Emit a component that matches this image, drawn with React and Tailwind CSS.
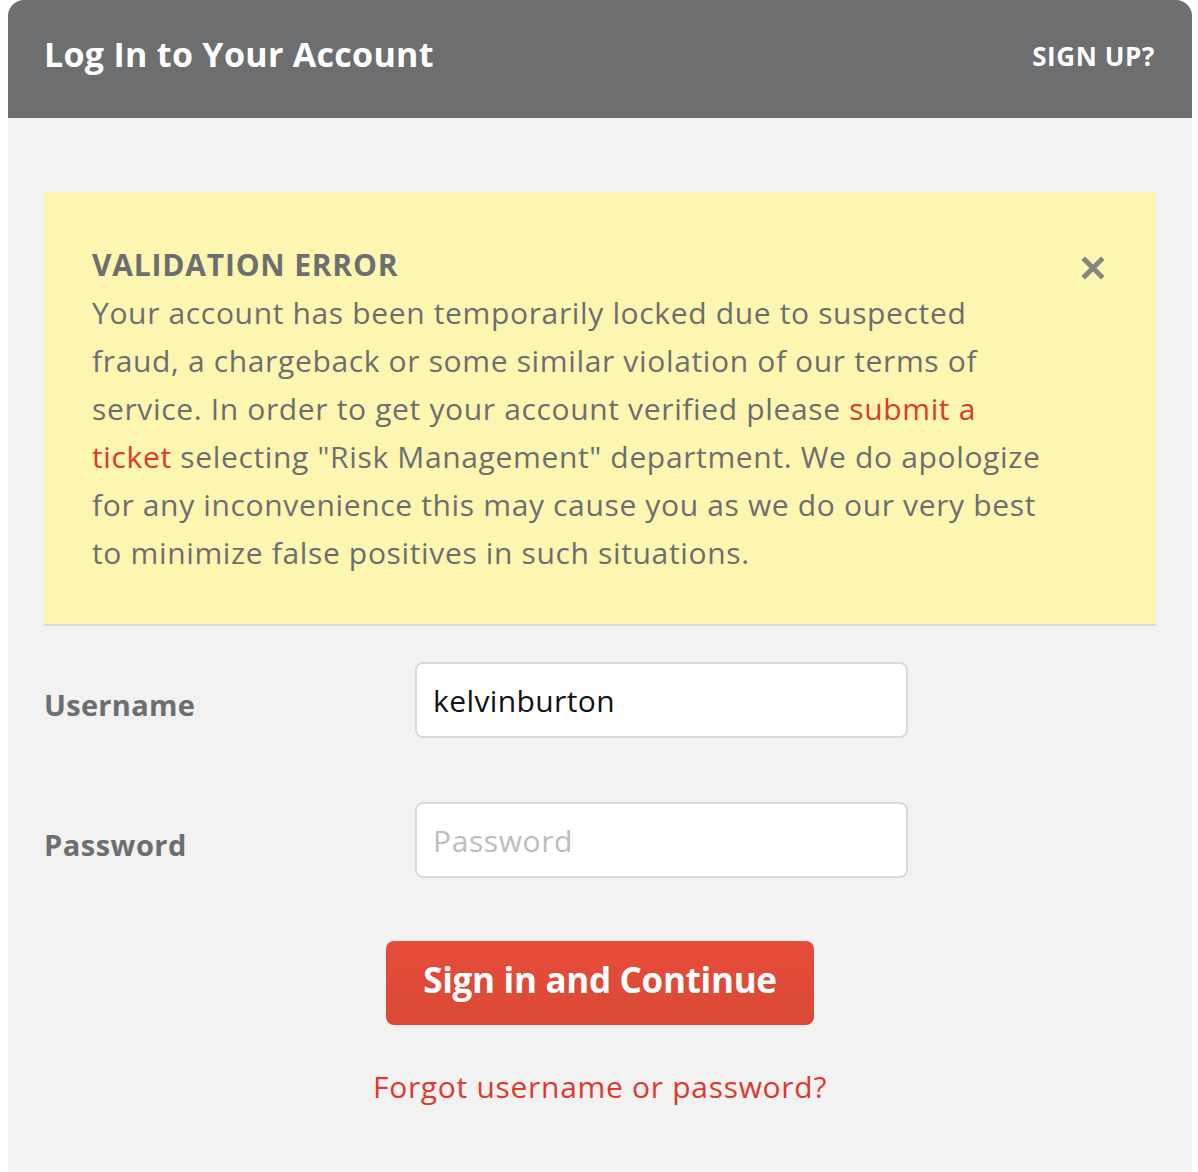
import React, { useState } from 'react';

const font = { fontFamily: '"Open Sans", "Liberation Sans", sans-serif' };

const App = () => {
  const [username, setUsername] = useState('kelvinburton');
  const [password, setPassword] = useState('');
  const [showAlert, setShowAlert] = useState(true);

  return (
    <div className="min-h-screen bg-white pl-2 pr-[6px]" style={font}>
      <div className="min-h-screen flex flex-col rounded-t-[16px] overflow-hidden bg-[#f2f2f2]">
        {/* header */}
        <header className="h-[118px] shrink-0 bg-[#6d6e70] flex items-center justify-between pl-[36px] pr-[37px]">
          <h1 className="text-white text-[34px] font-bold tracking-[0.3px] pb-[10px]">Log In to Your Account</h1>
          <a href="#" className="text-white text-[26px] font-bold tracking-[0.6px] pb-[6px]">SIGN UP?</a>
        </header>

        <main className="flex-1 px-[36px] pt-[74px] pb-16">
          {showAlert && (
            <div className="bg-[#fdf6b1] border-b-2 border-[#dcdad0] pl-[48px] pr-[48px] pt-[49px] pb-[47px] flex justify-between">
              <div className="text-[#6d6e70] text-[30px] leading-[48px] tracking-[0.65px]">
                <p className="font-bold tracking-[0.8px]">VALIDATION ERROR</p>
                <p>
                  Your account has been temporarily locked due to suspected<br />
                  fraud, a chargeback or some similar violation of our terms of<br />
                  service. In order to get your account verified please <a href="#" className="text-[#e0392b]">submit a</a><br />
                  <a href="#" className="text-[#e0392b]">ticket</a> selecting "Risk Management" department. We do apologize<br />
                  for any inconvenience this may cause you as we do our very best<br />
                  to minimize false positives in such situations.
                </p>
              </div>
              <button onClick={() => setShowAlert(false)} className="mt-[14px] mr-[2px] w-[26px] h-[26px] flex items-center justify-center text-[#858585]">
                <svg width="24" height="24" viewBox="0 0 24 24" fill="none" stroke="currentColor" strokeWidth="5" strokeLinecap="square">
                  <path d="M4 4l16 16M20 4L4 20" />
                </svg>
              </button>
            </div>
          )}

          <form className="pt-[36px] flex flex-col" onSubmit={(e) => e.preventDefault()}>
            <div className="flex items-center">
              <label className="w-[371px] text-[#6d6e70] text-[29px] font-bold tracking-[0.3px] pt-[9px]">Username</label>
              <input
                value={username}
                onChange={(e) => setUsername(e.target.value)}
                className="w-[493px] h-[76px] bg-white border-2 border-[#dadada] rounded-[8px] px-[16px] text-[30px] tracking-[0.4px] text-[#111] outline-none"
                style={font}
              />
            </div>
            <div className="flex items-center mt-[64px]">
              <label className="w-[371px] text-[#6d6e70] text-[29px] font-bold tracking-[0.5px] pt-[9px]">Password</label>
              <input
                type="password"
                placeholder="Password"
                value={password}
                onChange={(e) => setPassword(e.target.value)}
                className="w-[493px] h-[76px] bg-white border-2 border-[#dadada] rounded-[8px] px-[16px] text-[30px] tracking-[0.6px] text-[#111] placeholder:text-[#bdbdbd] outline-none"
                style={font}
              />
            </div>
            <div className="flex justify-center mt-[63px]">
              <button type="submit" className="w-[428px] h-[84px] rounded-[8px] bg-gradient-to-b from-[#e84c3a] to-[#d84936] text-white text-[35px] font-bold tracking-[-0.3px] pb-[6px]">
                Sign in and Continue
              </button>
            </div>
            <div className="flex justify-center mt-[39px]">
              <a href="#" className="text-[#e0392b] text-[30px] tracking-[0.7px]">Forgot username or password?</a>
            </div>
          </form>
        </main>
      </div>
    </div>
  );
};

export default App;
